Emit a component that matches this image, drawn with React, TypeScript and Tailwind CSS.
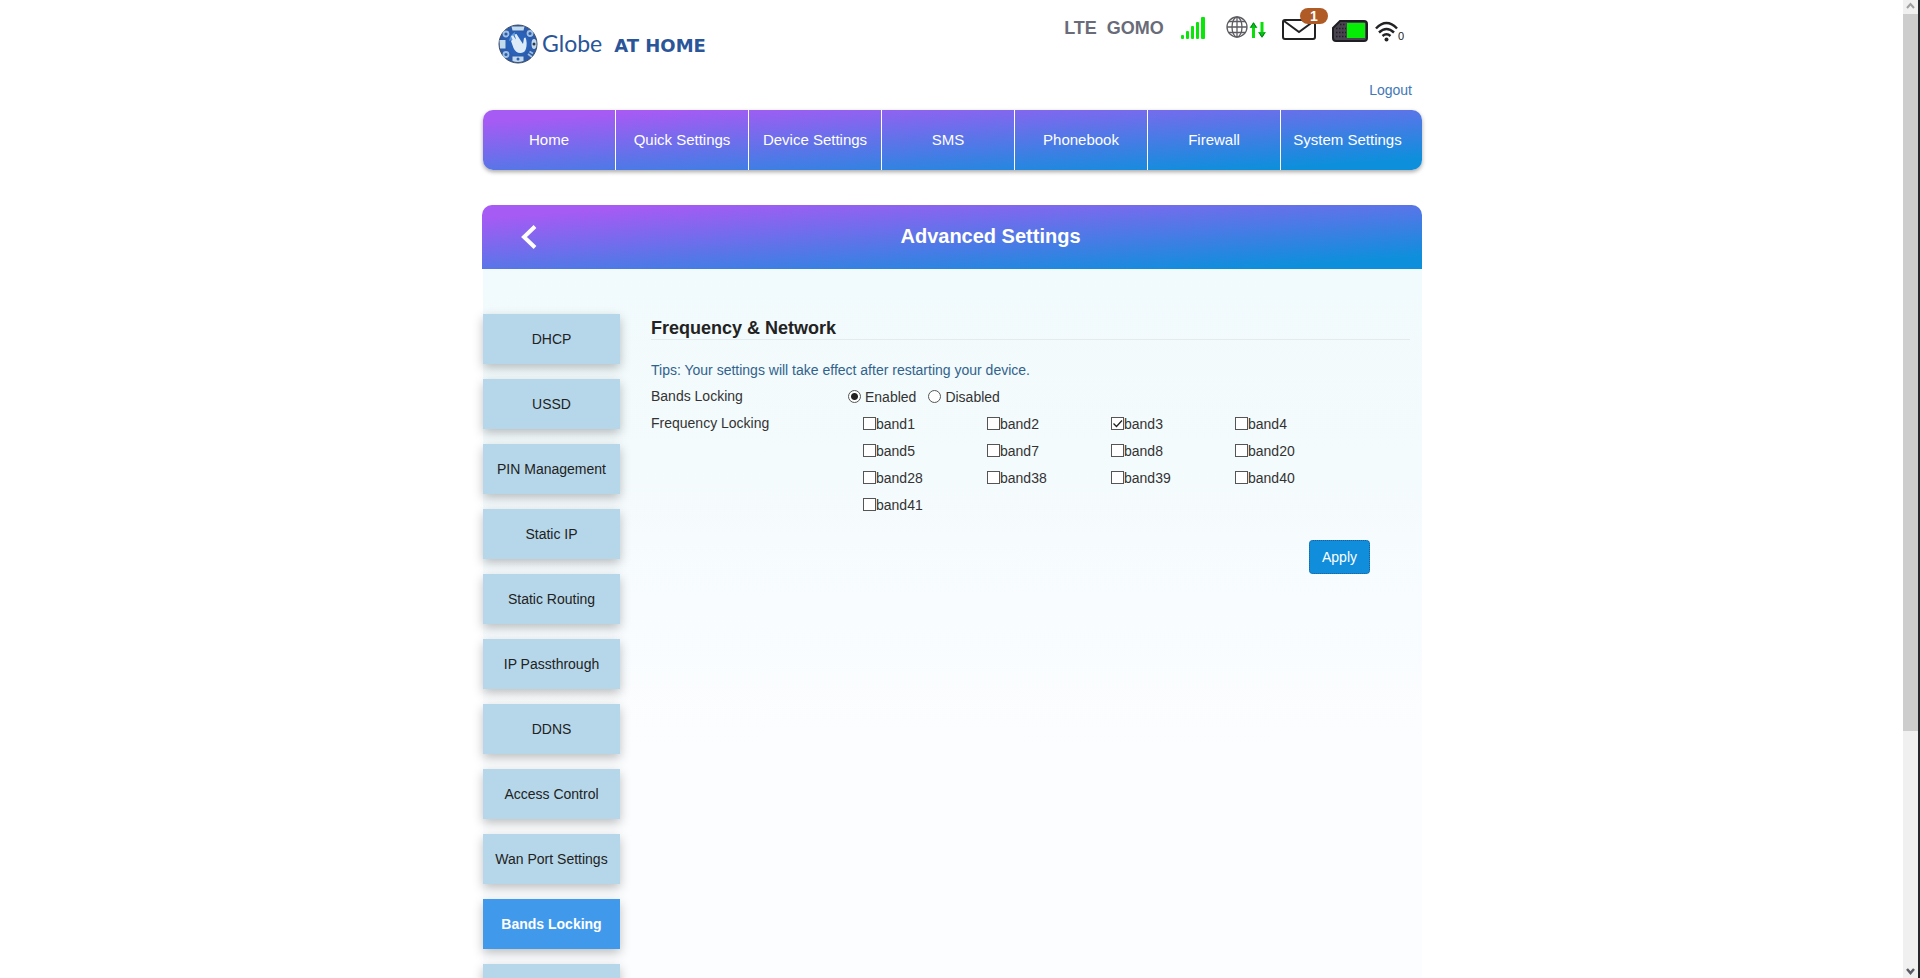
import React, { useState } from 'react';

const navItems = ['Home', 'Quick Settings', 'Device Settings', 'SMS', 'Phonebook', 'Firewall', 'System Settings'];

const sideItems = [
  'DHCP',
  'USSD',
  'PIN Management',
  'Static IP',
  'Static Routing',
  'IP Passthrough',
  'DDNS',
  'Access Control',
  'Wan Port Settings',
  'Bands Locking',
  '',
];

const bands = [1, 2, 3, 4, 5, 7, 8, 20, 28, 38, 39, 40, 41];

const barGradient = 'bg-[linear-gradient(to_bottom_right,#a55bf4_10%,#0e8fdc_90%)]';

const Logo: React.FC = () => (
  <a href="#home" className="flex items-center text-[#2a5599]">
    <svg width="40" height="40" viewBox="0 0 40 40" aria-hidden="true">
      <circle cx="20" cy="20" r="19" fill="#2c5cab" stroke="#3c4a63" strokeWidth="1" />
      <g fill="#c3d9ec">
        <path d="M13.500 2.500h13l-1 4h-11z" />
        <path d="M14.500 32.500h11v4.500q-6 2-11 0z" />
        <path d="M1.500 16h6v8.500H2z" />
        <ellipse cx="36" cy="20" rx="2.500" ry="5" />
      </g>
      <g fill="none" stroke="#9fc0e2" strokeWidth="1.800">
        <circle cx="8" cy="10" r="2.500" />
        <circle cx="32" cy="9.500" r="2.500" />
        <circle cx="8" cy="30.500" r="2.500" />
        <path d="M30 30l4 3M31.500 27.500l3.500 2" />
      </g>
      <circle cx="36" cy="20" r="1.500" fill="#26364f" />
      <circle cx="20" cy="35" r="1.500" fill="#2f62b0" />
      <circle cx="20" cy="19.500" r="12" fill="#2a62b9" />
      <path d="M11 17q1-6 6-9l-1 7z" fill="#5f9bdc" />
      <path d="M13 17l1.500-1.500L13 12l2-.5 3 4-1.500-5 2-.5 4.500 7 2 3 1-6 1.500-.5q2 5 .5 11-1 4-5 4.500-5 .5-7.500-5z" fill="#dcebf7" />
    </svg>
    <span className="ml-1 flex items-baseline gap-3 leading-8">
      <span className="text-[23px] font-['Lato']">Globe</span>
      <span className="text-[18px] font-bold font-['DejaVu_Sans']">AT HOME</span>
    </span>
  </a>
);

const StatusIcons: React.FC = () => (
  <div className="mr-2 flex items-start">
    <span className="mt-4 mr-4 text-[18px] leading-6 font-bold whitespace-pre text-[#696b78]">LTE  GOMO</span>
    <svg className="mt-4" width="26" height="24" viewBox="0 0 26 24" fill="#0ae60a" aria-label="Signal">
      <rect x="1" y="19" width="3" height="4" rx="1" />
      <rect x="6" y="15" width="3" height="8" rx="1" />
      <rect x="11" y="10" width="3" height="13" rx="1" />
      <rect x="16" y="6" width="3" height="17" rx="1" />
      <rect x="21" y="1" width="4" height="22" rx="1" />
    </svg>
    <svg className="mt-4 ml-5" width="42" height="24" viewBox="0 0 42 24" fill="none" aria-label="Network">
      <g stroke="#5c5c62" strokeWidth="1.300">
        <circle cx="11" cy="11" r="10" />
        <ellipse cx="11" cy="11" rx="5" ry="10" />
        <path d="M11 1v20M1 11h20M3 5.500h16M3 16.500h16" />
      </g>
      <path d="M27.500 22V8M36 6v14" stroke="#0adf0a" strokeWidth="3" />
      <path d="M23.500 12l4-6 4 6zM32 16l4 6 4-6z" fill="#0bbf1b" />
      <path d="M25 11l2.500-4 2.500 4M33.500 17l2.500 4 2.500-4" stroke="#0b7f1b" strokeWidth="1" />
    </svg>
    <div className="relative mt-2 ml-3">
      <svg width="48" height="32" viewBox="0 0 48 32" fill="none" stroke="#222225" strokeWidth="2" aria-label="Messages">
        <rect x="3" y="12" width="32" height="19" rx="2" />
        <path d="M4 13l15 11 15-11" />
      </svg>
      <span className="absolute top-0 right-0 w-7 rounded-full bg-[#b05a26] text-center text-[14px] leading-4 font-bold text-white">1</span>
    </div>
    <svg className="mt-5 ml-1" width="36" height="22" viewBox="0 0 36 22" aria-label="SIM card">
      <path d="M8 1h24q3 0 3 3v14q0 3-3 3H4q-3 0-3-3V8z" fill="#4a4450" stroke="#1f1f23" strokeWidth="2" />
      <path d="M4 8.500h10M4 12.500h10M4 16.500h10M8 4.500h6" stroke="#1f1f23" strokeWidth="1.500" strokeDasharray="1.500 1.500" />
      <rect x="15" y="3" width="18" height="15" fill="#05ec05" />
    </svg>
    <div className="mt-5 ml-1.5 flex items-end">
      <svg width="24" height="22" viewBox="0 0 24 22" fill="none" stroke="#222225" strokeWidth="2.500" aria-label="Wifi">
        <path d="M2 8.500q10.500-11 21 0M5 12.500q7.500-7 15 0M8.500 16q4-3.500 8 0" />
        <circle cx="12.500" cy="19.500" r="2" fill="#222225" stroke="none" />
      </svg>
      <span className="text-[11px] leading-3 text-[#222225]">0</span>
    </div>
  </div>
);

const Header: React.FC = () => (
  <header className="flex h-[110px] justify-between pr-2.5 pl-4">
    <div className="pt-6">
      <Logo />
    </div>
    <div className="flex flex-col items-end">
      <StatusIcons />
      <a href="#logout" className="mt-auto mb-2.5 text-[14px] leading-5 text-[#4078b8]">Logout</a>
    </div>
  </header>
);

const NavBar: React.FC = () => (
  <nav className={`ml-px flex h-[60px] overflow-hidden rounded-[10px] shadow-[0_2px_4px_rgba(0,0,0,0.35)] ${barGradient}`}>
    {navItems.map((item) => (
      <a
        key={item}
        href="#nav"
        className="flex w-[133px] items-center justify-center border-r border-white text-[15px] text-white last:border-r-0"
      >
        {item}
      </a>
    ))}
  </nav>
);

const SideMenu: React.FC = () => (
  <nav className="flex w-[137px] shrink-0 flex-col gap-[15px]">
    {sideItems.map((item) => (
      <a
        key={item}
        href="#side"
        className={`flex h-[50px] shrink-0 items-center justify-center text-[14px] shadow-[0_4px_10px_rgba(0,0,0,0.25)] ${
          item === 'Bands Locking' ? 'bg-[#4199ec] font-bold text-white' : 'bg-[#b6d7e9] text-[#222]'
        }`}
      >
        {item}
      </a>
    ))}
  </nav>
);

const radioClass =
  'size-[13px] appearance-none rounded-full border border-[#555] bg-white checked:bg-[radial-gradient(circle,#222_3px,white_4px)]';

const BandsForm: React.FC = () => {
  const [locking, setLocking] = useState(true);
  const [selected, setSelected] = useState<number[]>([3]);

  const toggle = (band: number) =>
    setSelected((prev) => (prev.includes(band) ? prev.filter((b) => b !== band) : [...prev, band]));

  return (
    <form className="ml-[31px] flex-1 pr-3 text-[14px] text-[#333]" onSubmit={(e) => e.preventDefault()}>
      <h2 className="border-b border-[#e3ebee] pt-[3px] text-[18px] leading-[22px] font-bold text-[#222]">Frequency &amp; Network</h2>
      <p className="mt-5 leading-5 text-[#31628c]">Tips: Your settings will take effect after restarting your device.</p>

      <fieldset className="mt-1 flex h-[27px]">
        <legend className="float-left w-[197px] leading-6">Bands Locking</legend>
        <label className="mr-3 flex items-start leading-[26px]">
          <input type="radio" name="locking" className={`mt-1.5 mr-1 ${radioClass}`} checked={locking} onChange={() => setLocking(true)} />
          Enabled
        </label>
        <label className="flex items-start leading-[26px]">
          <input type="radio" name="locking" className={`mt-1.5 mr-1 ${radioClass}`} checked={!locking} onChange={() => setLocking(false)} />
          Disabled
        </label>
      </fieldset>

      <fieldset className="flex">
        <legend className="float-left w-[212px] leading-6">Frequency Locking</legend>
        <div className="grid grid-cols-[repeat(4,124px)]">
          {bands.map((band) => (
            <label key={band} className="flex h-[27px] items-start leading-[26px]">
              <input
                type="checkbox"
                className="peer mt-1.5 size-[13px] appearance-none border border-[#555] bg-white"
                checked={selected.includes(band)}
                onChange={() => toggle(band)}
              />
              <svg
                className="mt-1.5 -ml-[13px] hidden size-[13px] peer-checked:block"
                viewBox="0 0 13 13"
                fill="none"
                stroke="#222"
                aria-hidden="true"
              >
                <path d="M2.500 6.500l3 3 5.500-6" strokeWidth="1.300" />
              </svg>
              band{band}
            </label>
          ))}
        </div>
      </fieldset>

      <div className="mt-[21px] mr-10 flex justify-end">
        <button type="submit" className="h-[34px] rounded border border-dotted border-[#1b5f9c] bg-[#108edc] px-3 text-white">
          Apply
        </button>
      </div>
    </form>
  );
};

const Scrollbar: React.FC = () => (
  <div className="flex w-[17px] shrink-0 flex-col border-r-2 border-[#25282b] bg-[#f0f0f0]" aria-hidden="true">
    <svg width="15" height="14" viewBox="0 0 15 14" fill="none" stroke="#a0a0a0" strokeWidth="2">
      <path d="M4 8l3.500-4L11 8" />
    </svg>
    <div className="h-[73.3%] bg-[#cdcdcd]" />
    <svg className="mt-auto" width="15" height="14" viewBox="0 0 15 14" fill="none" stroke="#5c5c66" strokeWidth="2.500">
      <path d="M4 5l3.500 4L11 5" />
    </svg>
  </div>
);

const App: React.FC = () => {
  return (
    <div className="flex h-screen overflow-hidden bg-white font-['Liberation_Sans',Arial,sans-serif]">
      <div className="flex-1 overflow-hidden pl-px">
        <div className="mx-auto max-w-[940px]">
          <Header />
          <NavBar />

          <main className="mt-[35px]">
            <div className={`flex h-16 items-center rounded-t-[10px] text-white ${barGradient}`}>
              <button type="button" aria-label="Back" className="flex w-[77px] justify-end pr-[22px]">
                <svg width="16" height="24" viewBox="0 0 16 24" fill="none" stroke="white" strokeWidth="4">
                  <path d="M14 1.500L3 12l11 10.500" />
                </svg>
              </button>
              <h1 className="flex-1 pb-0.5 text-center text-[20px] font-bold">Advanced Settings</h1>
            </div>
            <div className="ml-px flex bg-[linear-gradient(#f1fafc,#f4fbfd_200px,#fcfdff_480px)] pt-[45px]">
              <SideMenu />
              <BandsForm />
            </div>
          </main>
        </div>
      </div>
      <Scrollbar />
    </div>
  );
};

export default App;
